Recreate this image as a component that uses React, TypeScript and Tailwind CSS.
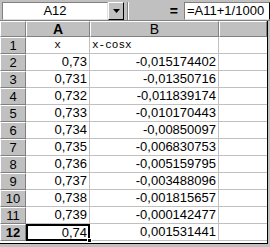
const rows: [string, string][] = [
  ["0,73", "-0,015174402"],
  ["0,731", "-0,01350716"],
  ["0,732", "-0,011839174"],
  ["0,733", "-0,010170443"],
  ["0,734", "-0,00850097"],
  ["0,735", "-0,006830753"],
  ["0,736", "-0,005159795"],
  ["0,737", "-0,003488096"],
  ["0,738", "-0,001815657"],
  ["0,739", "-0,000142477"],
  ["0,74", "0,001531441"],
];

const hdr =
  "bg-[#c0c0c0] border-t border-l border-t-white border-l-white border-r border-b border-r-[#808080] border-b-[#808080] flex items-center justify-center";

export default function App() {
  return (
    <div
      className="w-[270px] h-[247px] bg-[#c0c0c0] overflow-hidden text-black"
      style={{ fontFamily: "'Liberation Sans', Arial, sans-serif" }}
    >
      {/* formula bar */}
      <div className="h-[21px] flex items-center pt-[2px] pl-[2px] border-b border-[#808080]">
        <div className="w-[106px] h-[18px] bg-white border border-t-[#808080] border-l-[#808080] border-r-[#dfdfdf] border-b-[#dfdfdf] flex items-center justify-center text-[13px]">
          A12
        </div>
        <div className="w-[16px] h-[18px] bg-[#c0c0c0] border border-t-white border-l-white border-r-black border-b-black flex items-center justify-center">
          <svg width="7" height="4" viewBox="0 0 7 4">
            <path d="M0 0h7L3.5 4z" fill="#000" />
          </svg>
        </div>
        <div className="w-[2px] h-[18px] ml-[3px] border-l border-l-[#808080] border-r border-r-white" />
        <div className="flex-1 h-[18px] flex items-center justify-end pr-[6px] text-[14px] font-bold">=</div>
        <div className="w-[86px] h-[18px] bg-white border border-t-[#808080] border-l-[#808080] border-r-black border-b-[#dfdfdf] flex items-center pl-[2px] text-[13px] whitespace-nowrap overflow-hidden">
          =A11+1/1000
        </div>
      </div>

      {/* sheet */}
      <div className="w-[268px] h-[223px] border-r border-b border-black bg-white overflow-hidden">
        <div className="grid grid-cols-[26px_64px_129px_48px] grid-rows-[16px_repeat(12,17px)] text-[13px]">
          <div className={hdr} />
          <div className={hdr + " font-bold text-[14px]"}>A</div>
          <div className={hdr + " text-[14px]"}>B</div>
          <div className={hdr} />

          <div className={hdr}>1</div>
          <div
            className="border-r border-b border-[#c0c0c0] flex items-center justify-center text-[11px]"
            style={{ fontFamily: "'Liberation Mono', 'Courier New', monospace" }}
          >
            x
          </div>
          <div
            className="border-r border-b border-[#c0c0c0] flex items-center pl-[2px] text-[11px]"
            style={{ fontFamily: "'Liberation Mono', 'Courier New', monospace" }}
          >
            x-cosx
          </div>
          <div className="border-b border-[#c0c0c0]" />

          {rows.map(([a, b], i) => {
            const n = i + 2;
            const sel = n === 12;
            return [
              <div key={n + "h"} className={hdr + (sel ? " font-bold" : "")}>
                {n}
              </div>,
              sel ? (
                <div key={n + "a"} className="relative border-2 border-black flex items-center justify-end pr-[1px]">
                  {a}
                  <div className="absolute right-[-4px] bottom-[-4px] w-[5px] h-[5px] bg-black border border-white" />
                </div>
              ) : (
                <div key={n + "a"} className="border-r border-b border-[#c0c0c0] flex items-center justify-end pr-[2px]">
                  {a}
                </div>
              ),
              <div key={n + "b"} className="border-r border-b border-[#c0c0c0] flex items-center justify-end pr-[2px]">
                {b}
              </div>,
              <div key={n + "c"} className="border-b border-[#c0c0c0]" />,
            ];
          })}
        </div>
      </div>
    </div>
  );
}
